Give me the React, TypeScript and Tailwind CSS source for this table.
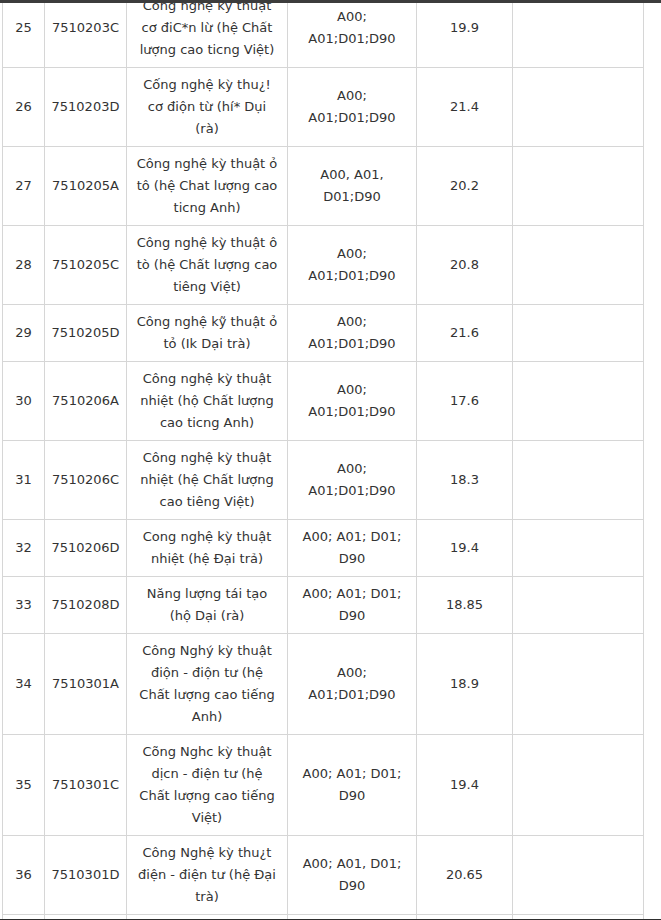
import React from "react";

type Row = {
  n: string;
  code: string;
  name: string[];
  combo: string[];
  score: string;
};

const rows: Row[] = [
  { n: "25", code: "7510203C", name: ["Công nghệ kỳ thuật", "cơ điC*n lừ (hệ Chất", "lượng cao ticng Việt)"], combo: ["A00;", "A01;D01;D90"], score: "19.9" },
  { n: "26", code: "7510203D", name: ["Cống nghệ kỳ thu¿!", "cơ điộn từ (hí* Dụi", "(rà)"], combo: ["A00;", "A01;D01;D90"], score: "21.4" },
  { n: "27", code: "7510205A", name: ["Công nghệ kỳ thuật ỏ", "tô (hệ Chat lượng cao", "ticng Anh)"], combo: ["A00, A01,", "D01;D90"], score: "20.2" },
  { n: "28", code: "7510205C", name: ["Công nghệ kỳ thuật ô", "tò (hệ Chất lượng cao", "tiêng Việt)"], combo: ["A00;", "A01;D01;D90"], score: "20.8" },
  { n: "29", code: "7510205D", name: ["Công nghệ kỹ thuật ỏ", "tỏ (Ik Dại trà)"], combo: ["A00;", "A01;D01;D90"], score: "21.6" },
  { n: "30", code: "7510206A", name: ["Công nghệ kỳ thuật", "nhiệt (hộ Chất lượng", "cao ticng Anh)"], combo: ["A00;", "A01;D01;D90"], score: "17.6" },
  { n: "31", code: "7510206C", name: ["Công nghệ kỳ thuật", "nhiệt (hệ Chất lượng", "cao tiêng Việt)"], combo: ["A00;", "A01;D01;D90"], score: "18.3" },
  { n: "32", code: "7510206D", name: ["Cong nghệ kỳ thuật", "nhiệt (hệ Đại trả)"], combo: ["A00; A01; D01;", "D90"], score: "19.4" },
  { n: "33", code: "7510208D", name: ["Năng lượng tái tạo", "(hộ Dại (rà)"], combo: ["A00; A01; D01;", "D90"], score: "18.85" },
  { n: "34", code: "7510301A", name: ["Công Nghý kỳ thuật", "điộn - điộn tư (hệ", "Chất lượng cao tiếng", "Anh)"], combo: ["A00;", "A01;D01;D90"], score: "18.9" },
  { n: "35", code: "7510301C", name: ["Cõng Nghc kỳ thuật", "dịcn - điện tư (hệ", "Chất lượng cao tiếng", "Việt)"], combo: ["A00; A01; D01;", "D90"], score: "19.4" },
  { n: "36", code: "7510301D", name: ["Công Nghệ kỳ thu¿t", "điện - điện tư (hệ Đại", "trà)"], combo: ["A00; A01, D01;", "D90"], score: "20.65" },
];

const td = "border border-[#d6d6d6] px-[3px] py-[6px] text-center align-middle overflow-visible";

function Lines({ lines }: { lines: string[] }) {
  return (
    <>
      {lines.map((l, i) => (
        <div key={i} className="whitespace-nowrap">
          {l}
        </div>
      ))}
    </>
  );
}

export default function App() {
  return (
    <div
      className="relative h-[920px] overflow-hidden bg-white text-[13px] leading-[22px] text-[#333333]"
      style={{ fontFamily: '"DejaVu Sans", Verdana, sans-serif' }}
    >
      <table className="ml-[2px] mt-[-12px] w-[641px] table-fixed border-collapse">
        <colgroup>
          <col className="w-[42px]" />
          <col className="w-[82px]" />
          <col className="w-[161px]" />
          <col className="w-[129px]" />
          <col className="w-[96px]" />
          <col className="w-[131px]" />
        </colgroup>
        <tbody>
          {rows.map((r) => (
            <tr key={r.n}>
              <td className={td}>{r.n}</td>
              <td className={td}>{r.code}</td>
              <td className={td}>
                <Lines lines={r.name} />
              </td>
              <td className={td}>
                <Lines lines={r.combo} />
              </td>
              <td className={td}>{r.score}</td>
              <td className={td}></td>
            </tr>
          ))}
          <tr className="h-[60px]">
            <td className={td}></td>
            <td className={td}></td>
            <td className={td}></td>
            <td className={td}></td>
            <td className={td}></td>
            <td className={td}></td>
          </tr>
        </tbody>
      </table>
      <div className="absolute left-0 right-0 top-0 h-[3px] bg-[#3c3c3c]" />
      <div className="absolute bottom-0 left-0 right-0 h-[1px] bg-[#2e2e2e]" />
    </div>
  );
}
